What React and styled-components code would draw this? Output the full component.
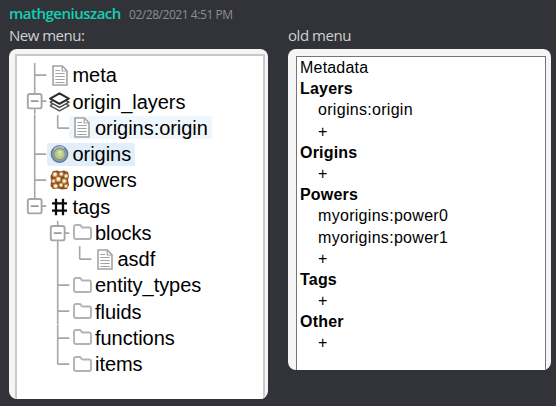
import React from "react";
import styled, { createGlobalStyle } from "styled-components";

const GlobalStyle = createGlobalStyle`
  html, body { margin: 0; background: #323338; }
  * { box-sizing: border-box; }
`;

const Page = styled.main`
  width: 556px;
  height: 406px;
  overflow: hidden;
  background: #323338;
  border-bottom: 1px solid #34303a;
  padding: 2px 0 0 9px;
  font-family: "Open Sans", "Noto Sans", sans-serif;
`;

const MessageHeader = styled.header`
  display: flex;
  align-items: baseline;
  gap: 9px;
  height: 24px;
  line-height: 23px;
  white-space: nowrap;
`;

const Author = styled.span`
  color: #12d1b4;
  font-size: 15px;
  font-weight: 600;
  width: 111px;
  letter-spacing: -0.5px;
`;

const Timestamp = styled.time`
  color: #8b8e94;
  font-size: 12px;
  letter-spacing: -0.45px;
`;

const Columns = styled.div`
  display: flex;
  gap: 20px;
`;

const Column = styled.section`
  width: ${({ $width }) => $width}px;
`;

const Caption = styled.div`
  height: 23px;
  line-height: 19px;
  color: #cfd0d2;
  font-size: 15px;
  letter-spacing: ${({ $tracking }) => $tracking}px;
  white-space: nowrap;
`;

const Card = styled.div`
  height: ${({ $height }) => $height}px;
  background: #f5f5f5;
  border-radius: 8px;
  overflow: hidden;
  padding: ${({ $padding }) => $padding};
  font-family: "Liberation Sans", Arial, sans-serif;
  color: #000;
`;

const TreePane = styled.div`
  height: 100%;
  background: #fff;
  border: 2px solid #c9c9c9;
  border-bottom: 0;
  padding: 6.2px 0 0 7px;
`;

const TreeRow = styled.div`
  display: flex;
  align-items: center;
  height: 26.25px;
`;

const Guide = styled.svg`
  flex: none;
  width: 22.5px;
  height: 26.3px;
  overflow: visible;
`;

const Node = styled.div`
  display: flex;
  align-items: center;
  height: 23px;
  padding-right: 4px;
  border-radius: 2px;
  background: ${({ $tone }) => $tone || "transparent"};
  font-size: 20px;
  line-height: 22px;
  letter-spacing: -0.04px;
  white-space: nowrap;
`;

const IconSlot = styled.span`
  display: flex;
  justify-content: center;
  align-items: center;
  width: 26px;
  height: 23px;
`;

const ListPane = styled.div`
  height: 100%;
  background: #fff;
  border: 1px solid #767676;
  border-bottom: 0;
  padding: 0 0 0 3px;
`;

const tracking = { plain: 0.2, group: 0.2, item: 0.3 };

const ListRow = styled.div`
  height: 21.2px;
  line-height: 21.2px;
  padding-left: ${({ $kind }) => ($kind === "item" ? 18 : 0)}px;
  font-size: 16px;
  font-weight: ${({ $kind }) => ($kind === "group" ? 700 : 400)};
  letter-spacing: ${({ $kind }) => tracking[$kind]}px;
  white-space: nowrap;
`;

function Connector({ kind, first }) {
  const x = 10.7;
  const mid = 13.15;
  const line = { stroke: "#a6a6a6", strokeWidth: 1.6 };
  if (kind === "blank") return <Guide />;
  const top = first ? 1 : 0;
  const bottom = kind === "last" || kind === "boxLast" ? mid : 26.5;
  return (
    <Guide viewBox="0 0 22.5 26.3">
      <line x1={x} x2={x} y1={top} y2={bottom} {...line} />
      {kind !== "through" && <line x1={x} x2="22.3" y1={mid} y2={mid} {...line} />}
      {kind.startsWith("box") && (
        <>
          <rect x="3.8" y="6" width="13.8" height="14.4" rx="2" fill="#fff" stroke="#a6a6a6" strokeWidth="1.9" />
          <line x1="6.8" x2="14.6" y1={mid} y2={mid} stroke="#999" strokeWidth="1.6" />
        </>
      )}
    </Guide>
  );
}

const DocIcon = () => (
  <svg width="16" height="21" viewBox="0 0 16 21" fill="none" stroke="#a3a3a3" strokeWidth="1.6">
    <path d="M1 1h9.3L15 5.8V20H1z" fill="#fff" />
    <path d="M10.2 1v5H15M3.3 5.5h4.8M3.3 8.5h9.4M3.3 11.5h9.4M3.3 14.5h9.4M3.3 17.5h9.4" strokeWidth="1.2" />
  </svg>
);

const LayersIcon = () => (
  <svg width="21" height="20" viewBox="0 0 21 20" fill="none" stroke="#333" strokeWidth="1.5" strokeLinejoin="round">
    <path d="M1 13.6l9.5 5.2 9.5-5.2-2.6-1.4M1 13.6l2.6-1.4" stroke="#555" />
    <path d="M1 10.2l9.5 5.2 9.5-5.2-2.6-1.4M1 10.2l2.6-1.4" stroke="#444" />
    <path d="M1.2 6.6l9.3-5.2 9.3 5.2-9.3 5.2z" fill="#fff" strokeWidth="2.1" stroke="#2a2a2a" />
  </svg>
);

const OriginIcon = () => (
  <svg width="19" height="20" viewBox="0 0 19 20">
    <circle cx="9.5" cy="10" r="8.2" fill="#8d9cba" stroke="#64759a" strokeWidth="1.4" />
    <path d="M4 5.2a8 8 0 0 1 10-1" stroke="#b4c1d4" strokeWidth="1.6" fill="none" />
    <circle cx="9.7" cy="10.1" r="5.6" fill="#b4c585" stroke="#84936f" strokeWidth="1" />
    <path d="M7 8.3l2-2 3 1 .8 3.2-2 2.3-3-.8z" fill="#cbd69b" />
    <path d="M9.5 7h2v2h-2z" fill="#e5e9bb" />
  </svg>
);

const PowerIcon = () => (
  <svg width="20" height="20" viewBox="0 0 20 20">
    <path d="M3 1l4-.5 3 1 4-1 4 1.5 1 4-1 4 1 5-2 4-5 .5-4-1-5 .5-2.5-3L1 11 .5 6z" fill="#845024" />
    <g fill="#cf9a5a">
      <circle cx="5" cy="4.5" r="2.7" />
      <circle cx="11.2" cy="4.2" r="2.4" />
      <circle cx="16.2" cy="6" r="2.4" />
      <circle cx="8.3" cy="9.2" r="2.8" />
      <circle cx="3.5" cy="11" r="2.2" />
      <circle cx="14.3" cy="11.1" r="2.6" />
      <circle cx="5.5" cy="16" r="2.6" />
      <circle cx="11" cy="15" r="2.3" />
      <circle cx="16.1" cy="16.2" r="2.1" />
    </g>
    <g fill="#fff3dc">
      <circle cx="5" cy="4.3" r="1.6" />
      <circle cx="11.3" cy="4" r="1.3" />
      <circle cx="16.2" cy="6" r="1.3" />
      <circle cx="8.4" cy="9" r="1.7" />
      <circle cx="3.5" cy="11" r="1.1" />
      <circle cx="14.3" cy="11" r="1.5" />
      <circle cx="5.6" cy="16" r="1.6" />
      <circle cx="11" cy="15" r="1.2" />
      <circle cx="16" cy="16.1" r="1.1" />
    </g>
  </svg>
);

const HashIcon = () => (
  <svg width="17" height="18" viewBox="0 0 17 18" stroke="#0a0a0a" strokeWidth="2.3">
    <path d="M5 .7v16.6M12 .7v16.6M1 5.3h15M1 12.7h15" />
  </svg>
);

const FolderIcon = () => (
  <svg width="19" height="17" viewBox="0 0 19 17" fill="#fff" stroke="#b3b3b3" strokeWidth="1.9" strokeLinejoin="round">
    <path d="M1 3q0-2 2-2h3.7q1.3 0 1.5 1.3.2 1.2 1.6 1.2H16q2 0 2 2V13q0 2-2 2H3q-2 0-2-2z" />
  </svg>
);

const tree = [
  { guides: ["tee"], icon: DocIcon, label: "meta", first: true },
  { guides: ["box"], icon: LayersIcon, label: "origin_layers" },
  { guides: ["through", "last"], icon: DocIcon, label: "origins:origin", tone: "#eff6fc" },
  { guides: ["tee"], icon: OriginIcon, label: "origins", tone: "#e2effa" },
  { guides: ["tee"], icon: PowerIcon, label: "powers" },
  { guides: ["boxLast"], icon: HashIcon, label: "tags" },
  { guides: ["blank", "box"], icon: FolderIcon, label: "blocks", first: true },
  { guides: ["blank", "through", "last"], icon: DocIcon, label: "asdf" },
  { guides: ["blank", "tee"], icon: FolderIcon, label: "entity_types" },
  { guides: ["blank", "tee"], icon: FolderIcon, label: "fluids" },
  { guides: ["blank", "tee"], icon: FolderIcon, label: "functions" },
  { guides: ["blank", "last"], icon: FolderIcon, label: "items" },
];

const list = [
  ["plain", "Metadata"],
  ["group", "Layers"],
  ["item", "origins:origin"],
  ["item", "+"],
  ["group", "Origins"],
  ["item", "+"],
  ["group", "Powers"],
  ["item", "myorigins:power0"],
  ["item", "myorigins:power1"],
  ["item", "+"],
  ["group", "Tags"],
  ["item", "+"],
  ["group", "Other"],
  ["item", "+"],
];

export default function App() {
  return (
    <Page>
      <GlobalStyle />
      <MessageHeader>
        <Author>mathgeniuszach</Author>
        <Timestamp>02/28/2021 4:51 PM</Timestamp>
      </MessageHeader>
      <Columns>
        <Column $width={259}>
          <Caption $tracking={-0.5}>New menu:</Caption>
          <Card $height={350} $padding="5px 3px 0 6px">
            <TreePane>
              {tree.map(({ guides, icon: Icon, label, tone, first }) => (
                <TreeRow key={label}>
                  {guides.map((kind, i) => (
                    <Connector key={i} kind={kind} first={first} />
                  ))}
                  <Node $tone={tone}>
                    <IconSlot><Icon /></IconSlot>
                    {label}
                  </Node>
                </TreeRow>
              ))}
            </TreePane>
          </Card>
        </Column>
        <Column $width={263}>
          <Caption $tracking={-0.45}>old menu</Caption>
          <Card $height={321} $padding="7px 5px 0 8px">
            <ListPane>
              {list.map(([kind, label], i) => (
                <ListRow key={i} $kind={kind}>{label}</ListRow>
              ))}
            </ListPane>
          </Card>
        </Column>
      </Columns>
    </Page>
  );
}
